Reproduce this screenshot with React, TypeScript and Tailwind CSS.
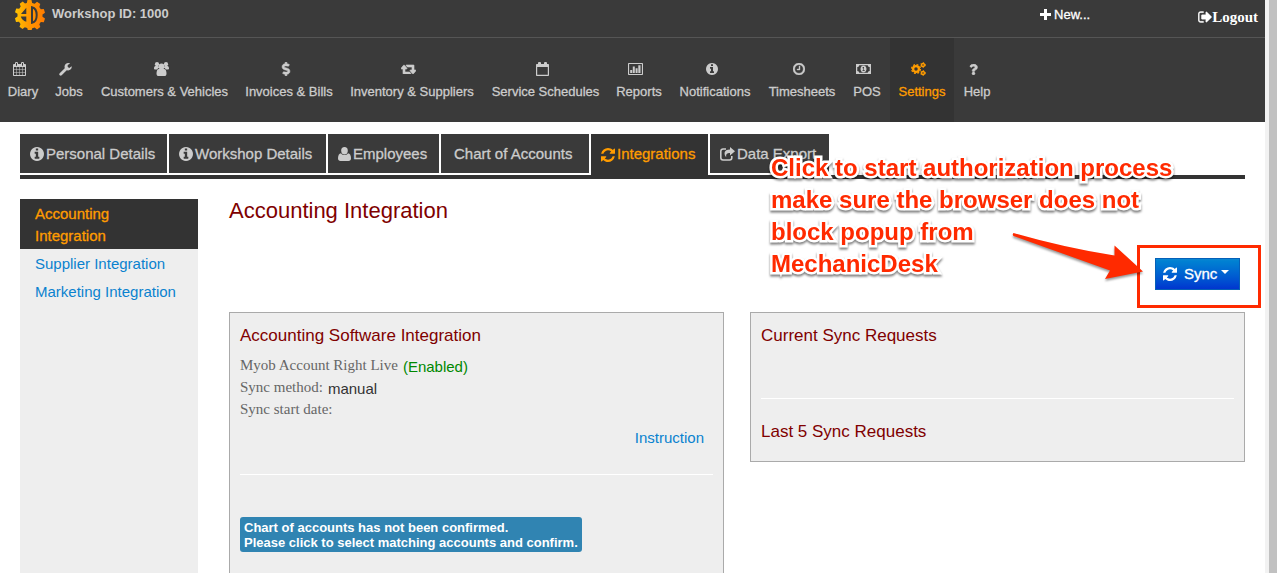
import type { ReactNode } from "react";
import { FaDollarSign, FaQuestion } from "react-icons/fa";

type IconProps = { className?: string };

function Glyph({ d, box = "0 0 1792 1792", className = "" }: { d: string; box?: string; className?: string }) {
  return (
    <svg viewBox={box} fill="currentColor" fillRule="evenodd" aria-hidden="true" className={className}>
      <path d={d} />
    </svg>
  );
}

const calendarPath =
  "M192 1664h288v-288h-288v288zm352 0h320v-288h-320v288zm-352-352h288v-320h-288v320zm352 0h320v-320h-320v320zm-352-384h288v-288h-288v288zm736 736h320v-288h-320v288zm-384-736h320v-288h-320v288zm768 736h288v-288h-288v288zm-384-352h320v-320h-320v320zm-352-864v-288q0-13-9.5-22.5t-22.5-9.5h-64q-13 0-22.5 9.5t-9.5 22.5v288q0 13 9.5 22.5t22.5 9.5h64q13 0 22.5-9.5t9.5-22.5zm736 864h288v-320h-288v320zm-384-384h320v-288h-320v288zm384 0h288v-288h-288v288zm32-480v-288q0-13-9.5-22.5t-22.5-9.5h-64q-13 0-22.5 9.5t-9.5 22.5v288q0 13 9.5 22.5t22.5 9.5h64q13 0 22.5-9.5t9.5-22.5zm384-64v1280q0 52-38 90t-90 38h-1408q-52 0-90-38t-38-90v-1280q0-52 38-90t90-38h128v-96q0-66 47-113t113-47h64q66 0 113 47t47 113v96h384v-96q0-66 47-113t113-47h64q66 0 113 47t47 113v96h128q52 0 90 38t38 90z";
const infoPath =
  "M1152 1376v-160q0-14-9-23t-23-9h-96v-512q0-14-9-23t-23-9h-320q-14 0-23 9t-9 23v160q0 14 9 23t23 9h96v320h-96q-14 0-23 9t-9 23v160q0 14 9 23t23 9h448q14 0 23-9t9-23zm-128-896v-160q0-14-9-23t-23-9h-192q-14 0-23 9t-9 23v160q0 14 9 23t23 9h192q14 0 23-9t9-23zm640 416q0 209-103 385.5t-279.5 279.5-385.5 103-385.5-103-279.5-279.5-103-385.5 103-385.5 279.5-279.5 385.5-103 385.5 103 279.5 279.5 103 385.5z";
const clockPath =
  "M1024 544v448q0 14-9 23t-23 9h-320q-14 0-23-9t-9-23v-64q0-14 9-23t23-9h224v-352q0-14 9-23t23-9h64q14 0 23 9t9 23zm416 352q0-148-73-273t-198-198-273-73-273 73-198 198-73 273 73 273 198 198 273 73 273-73 198-198 73-273zm224 0q0 209-103 385.5t-279.5 279.5-385.5 103-385.5-103-279.5-279.5-103-385.5 103-385.5 279.5-279.5 385.5-103 385.5 103 279.5 279.5 103 385.5z";
const retweetPath =
  "M1280 1504q0 13-9.5 22.5t-22.5 9.5h-960q-8 0-13.5-2t-9-7-5.5-8-3-11.5-1-11.5v-600h-192q-26 0-45-19t-19-45q0-24 15-41l320-384q19-22 49-22t49 22l320 384q15 17 15 41 0 26-19 45t-45 19h-192v384h576q16 0 25 11l160 192q7 10 7 21zm640-416q0 24-15 41l-320 384q-20 23-49 23t-49-23l-320-384q-15-17-15-41 0-26 19-45t45-19h192v-384h-576q-16 0-25-12l-160-192q-7-9-7-20 0-13 9.5-22.5t22.5-9.5h960q8 0 13.5 2t9 7 5.5 8 3 11.5 1 11.5v600h192q26 0 45 19t19 45z";
const refreshPath =
  "M1639 1056q0 5-1 7-64 268-268 434.5t-478 166.5q-146 0-282.5-55t-243.5-157l-129 129q-19 19-45 19t-45-19-19-45v-448q0-26 19-45t45-19h448q26 0 45 19t19 45-19 45l-137 137q71 66 161 102t187 36q134 0 250-65t186-179q11-17 53-117 8-23 30-23h192q13 0 22.5 9.5t9.5 22.5zm25-800v448q0 26-19 45t-45 19h-448q-26 0-45-19t-19-45 19-45l138-138q-148-137-349-137-134 0-250 65t-186 179q-11 17-53 117-8 23-30 23h-199q-13 0-22.5-9.5t-9.5-22.5v-7q65-268 270-434.5t480-166.5q146 0 284 55.5t245 156.5l130-129q19-19 45-19t45 19 19 45z";
const signOutPath =
  "M704 1440q0 4 1 20t.5 26.5-3 23.5-10 19.5-20.5 6.5h-320q-119 0-203.5-84.5t-84.5-203.5v-704q0-119 84.5-203.5t203.5-84.5h320q13 0 22.5 9.5t9.5 22.5q0 4 1 20t.5 26.5-3 23.5-10 19.5-20.5 6.5h-320q-66 0-113 47t-47 113v704q0 66 47 113t113 47h312l11.5 1 11.5 3 8 5.5 7 9 2 13.5zm928-544q0 26-19 45l-544 544q-19 19-45 19t-45-19-19-45v-288h-448q-26 0-45-19t-19-45v-384q0-26 19-45t45-19h448v-288q0-26 19-45t45-19 45 19l544 544q19 19 19 45z";

const InfoIcon = ({ className }: IconProps) => <Glyph d={infoPath} box="128 128 1536 1536" className={className} />;
const RefreshIcon = ({ className }: IconProps) => <Glyph d={refreshPath} box="128 128 1536 1536" className={className} />;

function UsersIcon({ className }: IconProps) {
  return (
    <svg viewBox="0 0 15 14" fill="currentColor" aria-hidden="true" className={className}>
      <circle cx="3" cy="2.2" r="2.1" />
      <circle cx="12" cy="2.2" r="2.1" />
      <path d="M0 6.5C0 4.900.6 4 1.500 4h2.200C4.400 4 5 4.800 5 5.800 4 6 3.500 6.700 3.300 7.600H1.400C.5 7.600 0 7.200 0 6.500zM15 6.500C15 4.900 14.400 4 13.500 4h-2.200C10.600 4 10 4.800 10 5.800c1 .2 1.500.9 1.700 1.800h1.900c.9 0 1.400-.4 1.400-1.100z" />
      <circle cx="7.5" cy="4.6" r="3" />
      <path d="M2.500 11.700C2.500 9 3.400 7 5 7h5c1.600 0 2.500 2 2.500 4.700 0 1.500-.9 2.300-2.100 2.300H4.600c-1.200 0-2.100-.8-2.100-2.300z" />
    </svg>
  );
}

function WrenchIcon({ className }: IconProps) {
  return (
    <svg viewBox="0 0 13 13" aria-hidden="true" className={className}>
      <path d="M1.700 11.300 7.500 5.500" stroke="currentColor" strokeWidth="2.800" strokeLinecap="round" />
      <path d="M12.600 3.200c.6 2-.9 4.300-3.400 4.300-2 0-3.700-1.600-3.700-3.700C5.500 1.500 7.500 0 9.500.1c.7 0 1.400.2 1.700.5L8.700 2.100v2l1.600.9z" fill="currentColor" />
    </svg>
  );
}

function GearsIcon({ className }: IconProps) {
  return (
    <svg viewBox="0 0 15 14" fill="none" stroke="currentColor" aria-hidden="true" className={className}>
      <circle cx="5" cy="7" r="2.9" strokeWidth="2.3" />
      <circle cx="5" cy="7" r="4.4" strokeWidth="1.3" strokeDasharray="1.9 1.556" />
      <circle cx="12" cy="3" r="1.5" strokeWidth="1.4" />
      <circle cx="12" cy="3" r="2.4" strokeWidth="1" strokeDasharray="1.2 1.313" />
      <circle cx="12" cy="11" r="1.5" strokeWidth="1.4" />
      <circle cx="12" cy="11" r="2.4" strokeWidth="1" strokeDasharray="1.2 1.313" />
    </svg>
  );
}

function BlankCalendarIcon({ className }: IconProps) {
  return (
    <svg viewBox="0 0 13 14" fill="currentColor" fillRule="evenodd" aria-hidden="true" className={className}>
      <path d="M1 2h1V1.200C2 .5 2.500 0 3.200 0h.6C4.500 0 5 .5 5 1.200V2h3v-.8C8 .5 8.500 0 9.200 0h.6c.7 0 1.200.5 1.200 1.200V2h1c.6 0 1 .4 1 1v10c0 .6-.4 1-1 1H1c-.6 0-1-.4-1-1V3c0-.6.4-1 1-1zm.2 3v7.800h10.600V5z" />
    </svg>
  );
}

function ChartIcon({ className }: IconProps) {
  return (
    <svg viewBox="0 0 15 12" fill="currentColor" fillRule="evenodd" aria-hidden="true" className={className}>
      <path d="M1 0h13c.6 0 1 .4 1 1v10c0 .6-.4 1-1 1H1c-.6 0-1-.4-1-1V1c0-.6.4-1 1-1zm.1 1.100v9.800h12.800V1.100z" />
      <path d="M2.200 7h2v3h-2zM4.800 3.500h2V10h-2zM7.600 5.200h2V10h-2zM10.300 2.300h2.200V10h-2.200z" />
    </svg>
  );
}

function MoneyIcon({ className }: IconProps) {
  return (
    <svg viewBox="0 0 15 10" fill="currentColor" fillRule="evenodd" aria-hidden="true" className={className}>
      <path d="M0 0h15v10H0zM3.200 1.200C3.200 2.300 2.400 3 1.300 3v4c1.100 0 1.900.7 1.900 1.800h8.600c0-1.100.8-1.800 1.900-1.800V3c-1.100 0-1.900-.7-1.900-1.800z" />
      <path d="M7.500 1.500c1.800 0 3 1.600 3 3.500s-1.200 3.500-3 3.500-3-1.600-3-3.500 1.200-3.500 3-3.500zm-1.100 2.100.5.8.5-.4v2.200h-.9V7h2.300v-.8H8V3h-.7z" />
    </svg>
  );
}

function UserIcon({ className }: IconProps) {
  return (
    <svg viewBox="0 0 13 14" fill="currentColor" aria-hidden="true" className={className}>
      <ellipse cx="6.5" cy="3.7" rx="3.3" ry="3.7" />
      <path d="M3 6.200C1 6.200 0 8.700 0 11.300 0 13 1 14 2.500 14h8c1.500 0 2.500-1 2.500-2.700 0-2.600-1-5.100-3-5.100C8.900 7.600 7.900 8.100 6.500 8.100S4.100 7.600 3 6.200z" />
    </svg>
  );
}

function ShareIcon({ className }: IconProps) {
  return (
    <svg viewBox="0 0 15 14" fill="none" aria-hidden="true" className={className}>
      <path d="M6 2H3a2.200 2.200 0 0 0-2.200 2.200v6.600A2.200 2.200 0 0 0 3 13h6.600a2.200 2.200 0 0 0 2.200-2.200V9" stroke="currentColor" strokeWidth="1.6" />
      <path d="M10 0l5 4.200-5 4.300V6C7 6 5.700 7 6.300 10.300 3.700 7.500 3.400 2.500 10 2.500z" fill="currentColor" />
    </svg>
  );
}

function Logo() {
  return (
    <svg viewBox="0 0 30 30" fill="none" aria-hidden="true" className="size-[30px]">
      <defs>
        <linearGradient id="gear" x1="0" x2="1">
          <stop offset="0" stopColor="#ffc400" />
          <stop offset="0.45" stopColor="#ff9800" />
          <stop offset="1" stopColor="#ff7a00" />
        </linearGradient>
      </defs>
      <path
        fill="url(#gear)"
        d="M12.500 0h4l.7 3 2.500.8L22 1.700l3.300 2.400-1 2.900 1.500 2.200 3-.2 1.200 3.800-2.500 1.700v2.200l2.500 1.700-1.200 3.800-3-.2-1.500 2.200 1 2.900-3.300 2.400-2.300-2.100-2.500.8-.7 2.500h-3.500l-.8-2.700-2.400-.8-2.300 1.700-3-2.200 1-2.800-1.500-2.100-3 .1L0 18.300l2.500-1.700v-2.800L0 12.200 1.200 8.500l3 .2 1.500-2.200-1-2.800 3-2.200L10 3.600l1.800-.7z"
      />
      <path d="M11.300 7.800 6 14h5.300zM5.800 16.500h5.500v5.300c-2.800-.9-4.900-2.700-5.500-5.300z" fill="#3a3a3a" />
      <path d="M17 7.200c3.400.8 4.700 4 4.700 7.800s-1.300 7-4.700 7.800z" stroke="#3a3a3a" strokeWidth="2" />
    </svg>
  );
}

type NavItem = { label: string; icon: ReactNode; width: string; active?: boolean };

const navItems: NavItem[] = [
  { label: "Diary", width: "w-[46px]", icon: <Glyph d={calendarPath} box="64 0 1664 1792" className="h-3.5 w-[13px]" /> },
  { label: "Jobs", width: "w-[46px]", icon: <WrenchIcon className="size-[13px]" /> },
  { label: "Customers & Vehicles", width: "w-[145px]", icon: <UsersIcon className="h-3.5 w-[15px]" /> },
  { label: "Invoices & Bills", width: "w-[104px]", icon: <FaDollarSign className="size-3.5 stroke-current stroke-[20px]" /> },
  { label: "Inventory & Suppliers", width: "w-[142px]", icon: <Glyph d={retweetPath} box="0 256 1920 1280" className="h-2.5 w-[15px] stroke-current stroke-[80px]" /> },
  { label: "Service Schedules", width: "w-[125px]", icon: <BlankCalendarIcon className="h-3.5 w-[13px]" /> },
  { label: "Reports", width: "w-[62px]", icon: <ChartIcon className="h-3 w-[15px]" /> },
  { label: "Notifications", width: "w-[90px]", icon: <InfoIcon className="size-3" /> },
  { label: "Timesheets", width: "w-[84px]", icon: <Glyph d={clockPath} box="128 128 1536 1536" className="size-3 stroke-current stroke-[50px]" /> },
  { label: "POS", width: "w-[46px]", icon: <MoneyIcon className="h-2.5 w-[15px]" /> },
  { label: "Settings", width: "w-16", icon: <GearsIcon className="h-3.5 w-[15px]" />, active: true },
  { label: "Help", width: "w-[46px]", icon: <FaQuestion className="size-[11px] stroke-current stroke-[24px]" /> },
];

const tabs: NavItem[] = [
  { label: "Personal Details", width: "w-[147px]", icon: <InfoIcon className="size-3.5" /> },
  { label: "Workshop Details", width: "w-[157px]", icon: <InfoIcon className="size-3.5" /> },
  { label: "Employees", width: "w-[111px]", icon: <UserIcon className="h-3.5 w-[13px]" /> },
  { label: "Chart of Accounts", width: "w-[148px]", icon: <span className="w-px" /> },
  { label: "Integrations", width: "w-[117px]", icon: <RefreshIcon className="size-3.5" />, active: true },
  { label: "Data Export", width: "w-[119px]", icon: <ShareIcon className="h-3.5 w-[15px]" /> },
];

function Header() {
  return (
    <header className="bg-[#3a3a3a] text-[#ccc]">
      <div className="flex h-[38px] items-start border-b border-[#555] pl-[15px] pr-[7px]">
        <Logo />
        <span className="ml-[7px] mt-[5px] text-[13px] font-bold leading-[18px]">Workshop ID: 1000</span>
        <a href="#new" className="ml-auto mr-[108px] mt-1.5 flex items-center gap-[3px] text-[13px] leading-[18px] text-white [-webkit-text-stroke:0.3px_white]">
          <Glyph d="M4 0h3v4h4v3H7v4H4V7H0V4h4z" box="0 0 11 11" className="mb-0.5 size-[11px]" />
          New...
        </a>
        <a href="#logout" className="mt-2 flex items-center font-['Liberation_Serif',serif] text-[15px] font-bold leading-[18px] text-white">
          <Glyph d={signOutPath} box="64 192 1600 1408" className="h-3 w-3.5 stroke-current stroke-[50px]" />
          Logout
        </a>
      </div>
      <nav className="flex h-[84px]">
        {navItems.map((item) => (
          <a
            key={item.label}
            href={"#" + item.label}
            className={
              (item.active
                ? "bg-[#333] text-[#ff9c00] [-webkit-text-stroke:0.3px_#ff9c00] "
                : "[-webkit-text-stroke:0.3px_#ccc] ") +
              "flex shrink-0 flex-col items-center whitespace-nowrap pt-6 text-[13px] leading-[18px] " +
              item.width
            }
          >
            <span className="mb-[7px] flex h-3.5 items-center pr-[7px]">{item.icon}</span>
            {item.label}
          </a>
        ))}
      </nav>
    </header>
  );
}

function Tabs() {
  return (
    <div className="flex gap-0.5 border-b-4 border-[#333] text-[15px]">
      {tabs.map((tab) => (
        <a
          key={tab.label}
          href={"#" + tab.label}
          className={
            (tab.active
              ? "-mb-1 h-[45px] bg-[#333] pb-1 text-[#ff9c00] [-webkit-text-stroke:0.3px_#ff9c00] "
              : "mb-0.5 h-[39px] bg-[#3a3a3a] pt-px text-[#ccc] [-webkit-text-stroke:0.3px_#ccc] ") +
            "flex items-center gap-0.5 whitespace-nowrap pl-2.5 " +
            tab.width
          }
        >
          {tab.icon}
          {tab.label}
        </a>
      ))}
    </div>
  );
}

function Callout() {
  return (
    <div className="pointer-events-none absolute inset-0">
      <p className="absolute -top-[47px] right-0 w-[474px] text-2xl font-bold leading-8 text-[#ff2a00] drop-shadow-[0_2px_1px_rgba(0,0,0,0.5)] [-webkit-text-stroke:5px_white] [paint-order:stroke_fill]">
        Click to start authorization process
        <br />
        make sure the browser does not
        <br />
        block popup from
        <br />
        MechanicDesk
      </p>
      <div className="absolute -right-4 top-[46px] h-[63px] w-[124px] border-[3px] border-[#ff2a00]" />
      <svg viewBox="0 0 132 50" aria-hidden="true" className="absolute right-[101px] top-8 h-[50px] w-[132px] drop-shadow-[0_2px_1px_rgba(0,0,0,0.4)]">
        <path d="M1.5 2Q0 3.500 1.500 5L98 39.500 93 48 131 40.500 102.500 14.500V24.500Q54 17 1.500 2z" fill="#ff2a00" />
      </svg>
    </div>
  );
}

const sideLink = "block px-[15px] pb-0.5 pt-1 text-[#0a82cf]";
const term = "font-['Liberation_Serif',serif] text-[#666]";
const panelTitle = "text-[17px] leading-5 text-[#800000]";

export default function App() {
  return (
    <div className="flex h-screen overflow-hidden bg-white font-['Liberation_Sans',sans-serif] text-base text-[#333]">
      <div className="flex min-w-0 flex-1 flex-col">
        <Header />
        <main className="flex flex-1 flex-col px-5 pt-3">
          <Tabs />
          <div className="flex flex-1 gap-[31px] pt-5">
            <aside className="w-[178px] shrink-0 bg-[#eee] text-[15px] leading-[22px]">
              <a href="#accounting" className="block bg-[#333] px-[15px] pb-0.5 pt-1 text-[#ff9c00] [-webkit-text-stroke:0.3px_#ff9c00]">
                Accounting
                <br />
                Integration
              </a>
              <a href="#supplier" className={sideLink}>Supplier Integration</a>
              <a href="#marketing" className={sideLink}>Marketing Integration</a>
            </aside>
            <section className="flex min-w-0 flex-1 flex-col">
              <div className="relative flex h-[113px] shrink-0 items-start justify-between">
                <h1 className="text-[22px] leading-6 text-[#800000]">Accounting Integration</h1>
                <button type="button" className="mr-[5px] mt-[59px] flex h-8 w-[85px] items-center border border-[#0560b8] bg-linear-to-b from-[#0886d2] to-[#0434cf] pl-[7px] text-[15px] text-white [-webkit-text-stroke:0.3px_white]">
                  <RefreshIcon className="size-3.5" />
                  <span className="ml-[7px] mr-1">Sync</span>
                  <span className="mb-1 border-x-4 border-t-4 border-x-transparent border-t-white" />
                </button>
                <Callout />
              </div>
              <div className="grid flex-1 grid-cols-2 gap-[26px]">
                <article className="border border-b-0 border-[#aaa] bg-[#eee] px-2.5 pt-[13px]">
                  <h2 className={panelTitle}>Accounting Software Integration</h2>
                  <dl className="mt-2 text-[15px] leading-[22px]">
                    <div className="flex h-[22px] gap-[5px]">
                      <dt className={term}>Myob Account Right Live</dt>
                      <dd className="pt-0.5 text-[#008800]">(Enabled)</dd>
                    </div>
                    <div className="flex h-[22px] gap-[5px]">
                      <dt className={term}>Sync method:</dt>
                      <dd className="pt-0.5">manual</dd>
                    </div>
                    <div className="h-[22px]">
                      <dt className={term}>Sync start date:</dt>
                    </div>
                  </dl>
                  <div className="mt-[7px] flex justify-end pr-[9px]">
                    <a href="#instruction" className="text-[15px] leading-[22px] text-[#0a82cf]">Instruction</a>
                  </div>
                  <hr className="mt-[25px] border-white" />
                  <button type="button" className="mt-[42px] rounded-[3px] bg-[#3084b2] px-1 pb-0.5 pt-[3px] text-left text-[13px] font-bold leading-[15px] text-white">
                    Chart of accounts has not been confirmed.
                    <br />
                    Please click to select matching accounts and confirm.
                  </button>
                </article>
                <article className="self-start border border-[#aaa] bg-[#eee] px-2.5 pb-[19px] pt-[13px]">
                  <h2 className={panelTitle}>Current Sync Requests</h2>
                  <hr className="mt-[52px] border-white" />
                  <h2 className={"mt-[23px] " + panelTitle}>Last 5 Sync Requests</h2>
                </article>
              </div>
            </section>
          </div>
        </main>
      </div>
      <div className="w-3 shrink-0 border-l-4 border-[#f2f2f2] bg-[#c1c1c1]" />
    </div>
  );
}
